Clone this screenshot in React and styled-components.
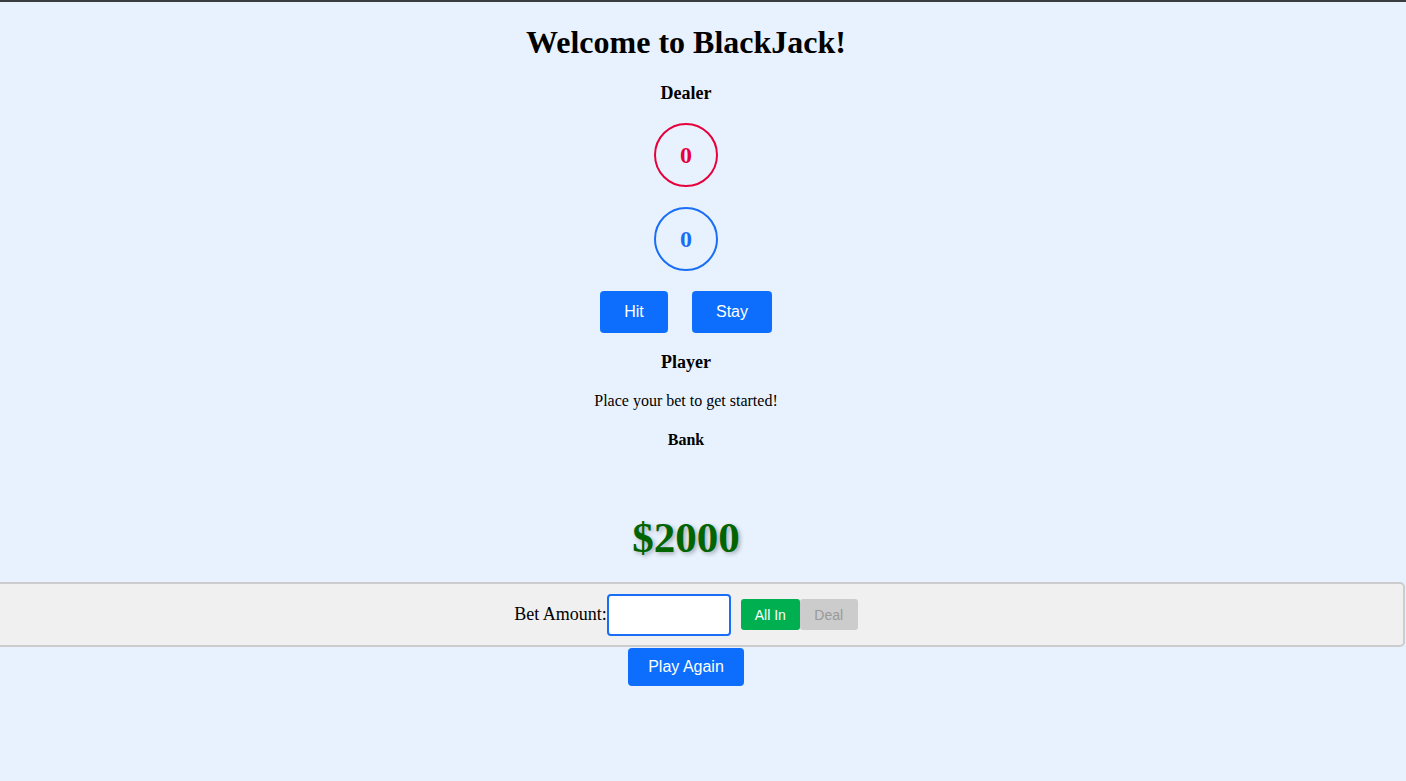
import React from 'react'
import styled, { createGlobalStyle } from 'styled-components'

const GlobalStyle = createGlobalStyle`
    html, body {
        margin: 0;
        padding: 0;
        background-color: #e8f2fe;
        font-family: "Liberation Serif", "Times New Roman", serif;
        overflow-x: hidden;
    }
    body {
        border-top: 2px solid #3b3d40;
        min-height: 779px;
    }
`

const Page = styled.div`
    display: flex;
    flex-direction: column;
    align-items: center;
    text-align: center;
    padding-right: 34px;
`

const Title = styled.h1`
    font-size: 32px;
    line-height: 37px;
    margin: 22px 0 0;
`

const Heading = styled.h3`
    font-size: 18px;
    line-height: 21px;
    margin: ${(p) => p.$top}px 0 0;
`

const Score = styled.div`
    box-sizing: border-box;
    width: 64px;
    height: 64px;
    margin-top: ${(p) => p.$top}px;
    border-radius: 50%;
    border: 2px solid ${(p) => p.$color};
    color: ${(p) => p.$color};
    display: flex;
    align-items: center;
    justify-content: center;
    font-size: 24px;
    font-weight: bold;
`

const Controls = styled.div`
    display: flex;
    gap: 24px;
    margin-top: 20px;
`

const Button = styled.button`
    width: ${(p) => p.$width}px;
    height: ${(p) => p.$height || 42}px;
    margin-top: ${(p) => p.$top || 0}px;
    padding: 0;
    border: 0;
    border-radius: 4px;
    background-color: #0d6efd;
    color: white;
    font-family: "Liberation Sans", Arial, sans-serif;
    font-size: 16px;
    cursor: pointer;
`

const Message = styled.p`
    font-size: 16px;
    line-height: 18px;
    margin: 19.5px 0 0;
`

const BankLabel = styled.h4`
    font-size: 16px;
    line-height: 18px;
    margin: 21px 0 0;
`

const Bank = styled.div`
    font-size: 43px;
    line-height: 50px;
    font-weight: bold;
    color: #006400;
    text-shadow: 2px 2px 4px rgba(0, 0, 0, 0.3);
    margin-top: 64px;
`

const BetBar = styled.form`
    box-sizing: border-box;
    align-self: stretch;
    height: 65px;
    margin: 19px -33px 0;
    background-color: #f0f0f0;
    border: 2px solid #cccccc;
    border-radius: 5px;
    display: flex;
    align-items: center;
    justify-content: center;
`

const BetLabel = styled.label`
    font-size: 18px;
`

const BetInput = styled.input`
    box-sizing: border-box;
    width: 124px;
    height: 42px;
    border: 2px solid #1a6ef5;
    border-radius: 4px;
    outline: 0;
    background: white;
    margin-right: 10px;
`

const SmallButton = styled.button`
    height: 31px;
    width: ${(p) => p.$width}px;
    padding: 0;
    border: 0;
    border-radius: 3px;
    background-color: ${(p) => p.$bg};
    color: ${(p) => p.$fg};
    font-family: "Liberation Sans", Arial, sans-serif;
    font-size: 14px;
`

export default function App() {
    return (
        <>
            <GlobalStyle />
            <Page>
                <Title>Welcome to BlackJack!</Title>
                <Heading $top={22}>Dealer</Heading>
                <Score $top={19} $color="#e6003c">0</Score>
                <Score $top={20} $color="#1a6ef5">0</Score>
                <Controls>
                    <Button $width={68}>Hit</Button>
                    <Button $width={80}>Stay</Button>
                </Controls>
                <Heading $top={18.5}>Player</Heading>
                <Message>Place your bet to get started!</Message>
                <BankLabel>Bank</BankLabel>
                <Bank>$2000</Bank>
                <BetBar onSubmit={(e) => e.preventDefault()}>
                    <BetLabel htmlFor="bet">Bet Amount:</BetLabel>
                    <BetInput id="bet" type="number" />
                    <SmallButton type="button" $width={59} $bg="#00b050" $fg="white">All In</SmallButton>
                    <SmallButton type="button" $width={58} $bg="#cccccc" $fg="#999999">Deal</SmallButton>
                </BetBar>
                <Button $width={116} $height={38} $top={1}>Play Again</Button>
            </Page>
        </>
    )
}
